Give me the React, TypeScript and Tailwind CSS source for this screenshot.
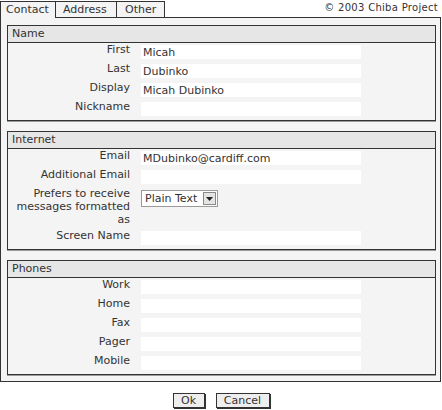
import React from "react";

type Row = { label: string; value?: string; select?: boolean; tall?: boolean };

const nameRows: Row[] = [
  { label: "First", value: "Micah" },
  { label: "Last", value: "Dubinko" },
  { label: "Display", value: "Micah Dubinko" },
  { label: "Nickname" },
];

const internetRows: Row[] = [
  { label: "Email", value: "MDubinko@cardiff.com" },
  { label: "Additional Email" },
  { label: "Prefers to receive messages formatted as", select: true, tall: true },
  { label: "Screen Name" },
];

const phoneRows: Row[] = [
  { label: "Work" },
  { label: "Home" },
  { label: "Fax" },
  { label: "Pager" },
  { label: "Mobile" },
];

const PlainSelect = () => (
  <div className="mt-[1px] flex h-[17px] w-[77px] items-center border border-[#9a9a9a] bg-white pl-[3px] pr-[1px]">
    <span className="flex-1 leading-none">Plain Text</span>
    <span className="flex h-[13px] w-[13px] items-center justify-center border border-[#8a8a8a] bg-[#e4e4e4]">
      <svg width="7" height="4" viewBox="0 0 7 4">
        <path d="M0 0h7L3.5 4z" fill="#222" />
      </svg>
    </span>
  </div>
);

const FieldRow = ({ row }: { row: Row }) => (
  <div className={`flex ${row.tall ? "h-[42px]" : "h-[19px]"}`}>
    <div className="w-[122px] text-right leading-[13px]">{row.label}</div>
    <div className="ml-[11px] pt-[2px]">
      {row.select ? (
        <PlainSelect />
      ) : (
        <div className="flex h-[14px] w-[220px] items-center bg-white pl-[2px] leading-none">
          {row.value}
        </div>
      )}
    </div>
  </div>
);

const Section = ({ title, rows }: { title: string; rows: Row[] }) => (
  <div className="w-[429px] border border-[#333] bg-[#f4f4f4] pb-[1px] shadow-[0_1px_0_#9a9a9a]">
    <div className="flex h-[17px] items-center border-b border-[#333] bg-[#e6e6e6] pl-[4px]">{title}</div>
    {rows.map((r) => (
      <FieldRow key={r.label} row={r} />
    ))}
  </div>
);

export default function App() {
  return (
    <div className="h-[410px] w-[442px] bg-white font-['DejaVu_Sans',Verdana,sans-serif] text-[11px] text-[#333]">
      <div className="flex h-[17px] items-start justify-between">
        <div className="mt-[1px] flex h-[16px]">
          <div className="relative z-10 h-[17px] w-[56px] border border-b-0 border-[#333] bg-[#f4f4f4] pl-[5px] leading-[15px]">
            Contact
          </div>
          <div className="h-[16px] w-[61px] border border-l-0 border-b-0 border-[#333] bg-[#f4f4f4] pl-[7px] leading-[15px]">
            Address
          </div>
          <div className="h-[16px] w-[48px] border border-l-0 border-b-0 border-[#333] bg-[#f4f4f4] pl-[8px] leading-[15px]">
            Other
          </div>
        </div>
        <div className="mr-[4px] mt-[2px] text-[10px] leading-[11px] tracking-[0.3px]">© 2003 Chiba Project</div>
      </div>

      <div className="flex h-[365px] w-[441px] flex-col gap-[10px] border border-[#333] bg-[#f4f4f4] pl-[6px] pt-[7px]">
        <Section title="Name" rows={nameRows} />
        <Section title="Internet" rows={internetRows} />
        <Section title="Phones" rows={phoneRows} />
      </div>

      <div className="mt-[11px] flex justify-center gap-[11px]">
        <button className="h-[15px] w-[32px] border border-[#333] bg-[#eeeeee] leading-none shadow-[1px_1px_0_#333]">
          Ok
        </button>
        <button className="h-[15px] w-[54px] border border-[#333] bg-[#eeeeee] leading-none shadow-[1px_1px_0_#333]">
          Cancel
        </button>
      </div>
    </div>
  );
}
